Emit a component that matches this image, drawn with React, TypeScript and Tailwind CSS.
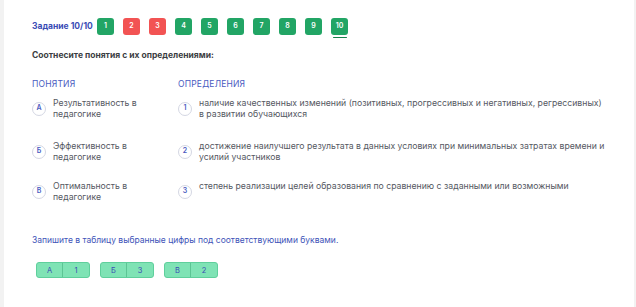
import React from 'react';

const tasks = [
  { n: 1, ok: true },
  { n: 2, ok: false },
  { n: 3, ok: false },
  { n: 4, ok: true },
  { n: 5, ok: true },
  { n: 6, ok: true },
  { n: 7, ok: true },
  { n: 8, ok: true },
  { n: 9, ok: true },
  { n: 10, ok: true },
];

const terms = [
  { key: 'А', text: ['Результативность в', 'педагогике'] },
  { key: 'Б', text: ['Эффективность в', 'педагогике'] },
  { key: 'В', text: ['Оптимальность в', 'педагогике'] },
];

const defs = [
  {
    key: '1',
    text: [
      'наличие качественных изменений (позитивных, прогрессивных и негативных, регрессивных)',
      'в развитии обучающихся',
    ],
  },
  {
    key: '2',
    text: [
      'достижение наилучшего результата в данных условиях при минимальных затратах времени и',
      'усилий участников',
    ],
  },
  { key: '3', text: ['степень реализации целей образования по сравнению с заданными или возможными'] },
];

const answers = [
  ['А', '1'],
  ['Б', '3'],
  ['В', '2'],
];

const rowHeights = ['h-[43px]', 'h-[40px]', 'h-[40px]'];

const Badge = ({ label }: { label: string }) => (
  <div className="w-[14px] h-[14px] shrink-0 rounded-full border border-[#d4d7e3] bg-white flex items-center justify-center text-[7px] font-semibold text-[#4a5bbf]">
    {label}
  </div>
);

const Item = ({ label, lines, h }: { label: string; lines: string[]; h: string }) => (
  <div className={`flex items-start gap-[7px] ${h}`}>
    <Badge label={label} />
    <div className="text-[8.7px] leading-[11px] text-[#55585f] -mt-[4px]">
      {lines.map((l, i) => (
        <div key={i}>{l}</div>
      ))}
    </div>
  </div>
);

export default function App() {
  return (
    <div
      className="w-[636px] h-[307px] bg-[#f2f2f2] pl-[4px] pr-[2px]"
      style={{ fontFamily: 'Inter, "Noto Sans", sans-serif' }}
    >
      <div className="h-full bg-white pl-[28px] pt-[18px]">
        <div className="flex items-center">
          <div className="text-[8.5px] font-bold text-[#3a4cb5] w-[65px] whitespace-nowrap">Задание 10/10</div>
          <div className="flex gap-[9px]">
            {tasks.map((t) => (
              <div key={t.n} className="relative">
                <div
                  className={`w-[17px] h-[17px] rounded-[3px] flex items-center justify-center text-[7px] font-semibold text-white ${
                    t.ok ? 'bg-[#22a565]' : 'bg-[#f25353]'
                  }`}
                >
                  {t.n}
                </div>
                {t.n === 10 && (
                  <div className="absolute left-[2px] right-[1px] -bottom-[3px] h-[1.5px] bg-[#16804c] rounded" />
                )}
              </div>
            ))}
          </div>
        </div>

        <div className="mt-[14px] text-[8.5px] font-bold text-[#3b3d42]">
          Соотнесите понятия с их определениями:
        </div>

        <div className="flex mt-[16px]">
          <div className="w-[146px]">
            <div className="text-[8.5px] text-[#4a5bbf] tracking-[0.2px] mb-[11px]">ПОНЯТИЯ</div>
            {terms.map((t, i) => (
              <Item key={t.key} label={t.key} lines={t.text} h={rowHeights[i]} />
            ))}
          </div>
          <div className="flex-1">
            <div className="text-[8.5px] text-[#4a5bbf] tracking-[0.2px] mb-[11px]">ОПРЕДЕЛЕНИЯ</div>
            {defs.map((d, i) => (
              <Item key={d.key} label={d.key} lines={d.text} h={rowHeights[i]} />
            ))}
          </div>
        </div>

        <div className="mt-[9px] text-[8.5px] text-[#4053b8]">
          Запишите в таблицу выбранные цифры под соответствующими буквами.
        </div>

        <div className="flex gap-[10px] mt-[16px] ml-[4px]">
          {answers.map(([a, b]) => (
            <div
              key={a}
              className="flex h-[16px] rounded-[3px] border border-[#5fcf9c] bg-[#7fe3b5] text-[7.5px] text-[#3a4cb5] overflow-hidden"
            >
              <div className="w-[26px] flex items-center justify-center border-r border-[#5cc594]">{a}</div>
              <div className="w-[26px] flex items-center justify-center">{b}</div>
            </div>
          ))}
        </div>
      </div>
    </div>
  );
}
